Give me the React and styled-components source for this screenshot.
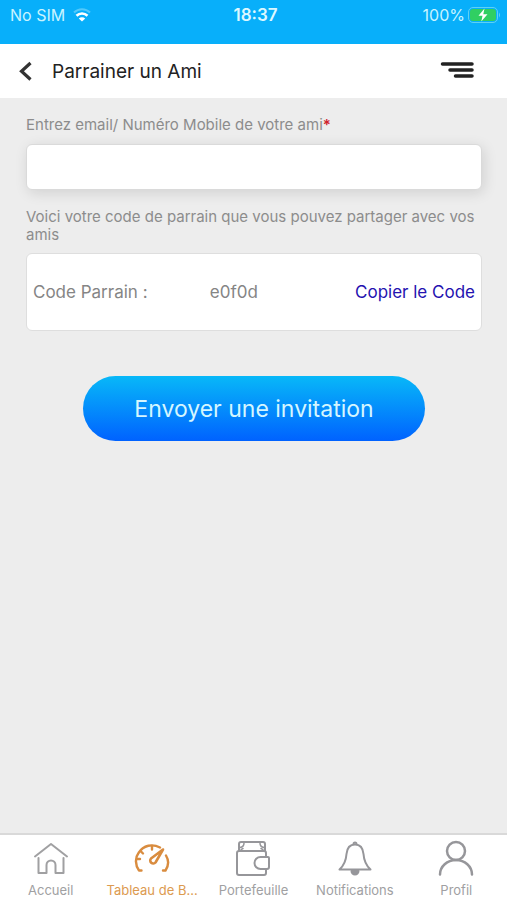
import React, { useState } from "react";
import styled, { createGlobalStyle } from "styled-components";

const GlobalStyle = createGlobalStyle`
  * {
    box-sizing: border-box;
  }

  body {
    margin: 0;
    background: #ededed;
    font-family: Inter, "Liberation Sans", sans-serif;
  }

  button,
  input {
    font-family: inherit;
  }
`;

const Screen = styled.div`
  display: flex;
  flex-direction: column;
  min-height: 100vh;
`;

const StatusBar = styled.div`
  display: grid;
  grid-template-columns: 1fr auto 1fr;
  align-items: center;
  height: 44px;
  padding: 0 6px 14px 10px;
  background: #08affa;
  color: #c9f4ff;
  font-size: 16px;
`;

const StatusGroup = styled.div`
  display: flex;
  align-items: center;
  justify-content: ${(props) => (props.$end ? "flex-end" : "flex-start")};
  gap: ${(props) => (props.$end ? "3px" : "8px")};
`;

const Clock = styled.span`
  font-size: 17px;
  font-weight: 600;
  color: #dcf8ff;
`;

const Header = styled.header`
  display: flex;
  align-items: center;
  height: 54px;
  padding: 0 32px 0 18px;
  background: #fff;
`;

const IconButton = styled.button`
  display: flex;
  padding: 0;
  border: 0;
  background: none;
  cursor: pointer;
`;

const Title = styled.h1`
  flex: 1;
  margin: 0 0 0 18px;
  font-size: 19px;
  font-weight: 400;
  color: #222;
`;

const Form = styled.form`
  flex: 1;
  display: flex;
  flex-direction: column;
  padding: 18px 25px 24px 26px;
`;

const Label = styled.label`
  font-size: 15px;
  line-height: 18px;
  color: #8c8c8c;
`;

const Required = styled.span`
  font-weight: 600;
  color: #d0202c;
`;

const TextInput = styled.input`
  height: 46px;
  margin: 10px 0 18px;
  padding: 0 12px;
  border: 1px solid #dadada;
  border-radius: 6px;
  background: #fff;
  box-shadow: 2px 3px 14px rgba(0, 0, 0, 0.12);
  font-size: 17px;
  color: #444;
  outline: none;
`;

const Hint = styled.p`
  margin: 0 0 9px;
  font-size: 15px;
  line-height: 18px;
  color: #8c8c8c;
`;

const CodeBox = styled.div`
  display: grid;
  grid-template-columns: 40% 1fr auto;
  align-items: center;
  height: 78px;
  padding: 0 6px;
  border: 1px solid #dedede;
  border-radius: 6px;
  background: #fff;
  font-size: 17px;
  color: #858585;
`;

const CopyButton = styled.button`
  padding: 0;
  border: 0;
  background: none;
  font-size: 17px;
  color: #2412b0;
  cursor: pointer;
`;

const SubmitButton = styled.button`
  align-self: center;
  width: 75%;
  height: 65px;
  margin-top: 45px;
  border: 0;
  border-radius: 33px;
  background: linear-gradient(#08b8f8, #0062ff);
  font-size: 23px;
  color: #d4f6ff;
  cursor: pointer;
`;

const TabBar = styled.nav`
  display: grid;
  grid-template-columns: repeat(5, 1fr);
  height: 67px;
  border-top: 2px solid #d9d9d9;
  background: #fff;
`;

const Tab = styled.a`
  display: flex;
  flex-direction: column;
  align-items: center;
  gap: 5px;
  min-width: 0;
  padding-top: 5px;
  font-size: 13px;
  line-height: 18px;
  white-space: nowrap;
  text-decoration: none;
  color: ${(props) => (props.$active ? "#dc9a50" : "#a0a0a2")};
`;

const TabIcon = ({ children, color = "#96969a" }) => (
  <svg
    width="36"
    height="36"
    viewBox="0 0 36 36"
    fill="none"
    stroke={color}
    strokeWidth="2"
    strokeLinecap="round"
    strokeLinejoin="round"
    aria-hidden="true"
  >
    {children}
  </svg>
);

const HomeIcon = () => (
  <TabIcon color="#a0a0a2">
    <path d="M2 16.500 18 4l16 12.500" />
    <path d="M5.500 18v15h8v-8a4.500 4.500 0 0 1 9 0v8h8V18" />
  </TabIcon>
);

const GaugeIcon = () => (
  <TabIcon color="#d98c3f">
    <path
      d="M7.500 30.500H5C1 25 1 17.500 4.500 13 9.500 5 18.500 3.500 26 7.500M32 15.500c3 5 2.500 10.500-.5 15H29"
      strokeWidth="2.400"
    />
    <path d="M18 6v3.500M7 11.500l2 2M3 19h3" strokeWidth="2.400" />
    <path d="M29 9.500 17 18.500a3 3 0 1 0 4.500 4Z" strokeWidth="2.600" />
  </TabIcon>
);

const WalletIcon = () => (
  <TabIcon>
    <path d="M4 11V4q0-2 2-2h22q2 0 2 2v7" />
    <path d="M5 7.500q4-.5 4-4.500M29 7.500q-4-.5-4-4.500M5.500 11q.5-2 2.500-2.500M28.500 11q-.5-2-2.500-2.500" strokeWidth="1.500" />
    <path d="M31 17v-4q0-2-2-2H4q-2 0-2 2v20q0 2 2 2h25q2 0 2-2v-4" />
    <path d="M33 17h-7.500a6 6 0 0 0 0 12H32q2 0 2-2V18q0-1-1-1Z" />
  </TabIcon>
);

const BellIcon = () => (
  <TabIcon>
    <path d="M18 4.500c-5.500 0-8 4-8.500 9.500-.5 7-2 11-7 15.500h31c-5-4.500-6.500-8.500-7-15.500-.5-5.500-3-9.500-8.500-9.500Z" />
    <path d="M16.500 4a1.500 1.500 0 0 1 3 0" />
    <path d="M14.500 31a3.500 3.500 0 0 0 7 0Z" fill="#96969a" />
  </TabIcon>
);

const ProfileIcon = () => (
  <TabIcon>
    <circle cx="18" cy="11" r="9" strokeWidth="2.500" />
    <path d="M2 34.500a16 14.500 0 0 1 32 0" strokeWidth="2.500" />
  </TabIcon>
);

const tabs = [
  { key: "home", label: "Accueil", icon: HomeIcon },
  { key: "dashboard", label: "Tableau de B...", icon: GaugeIcon, active: true },
  { key: "wallet", label: "Portefeuille", icon: WalletIcon },
  { key: "notifications", label: "Notifications", icon: BellIcon },
  { key: "profile", label: "Profil", icon: ProfileIcon },
];

const App = () => {
  const [contact, setContact] = useState("");
  const code = "e0f0d";

  const handleCopy = () => {
    if (navigator.clipboard) {
      navigator.clipboard.writeText(code);
    }
  };

  return (
    <Screen>
      <GlobalStyle />
      <StatusBar>
        <StatusGroup>
          <span>No SIM</span>
          <svg width="18" height="14" viewBox="0 0 18 14" fill="none" aria-hidden="true">
            <path d="M1 4.500a11.500 11.500 0 0 1 16 0" stroke="#52c9fb" strokeWidth="2" />
            <path d="M3.500 7.700a8 8 0 0 1 11 0" stroke="#fff" strokeWidth="2.600" />
            <path d="M9 13.500 5.800 10.500a4.500 4.500 0 0 1 6.400 0Z" fill="#fff" />
          </svg>
        </StatusGroup>
        <Clock>18:37</Clock>
        <StatusGroup $end>
          <span>100%</span>
          <svg width="33" height="16" viewBox="0 0 33 16" aria-hidden="true">
            <rect x="0.500" y="0.500" width="29" height="15" rx="4.500" fill="none" stroke="#5fd0f5" />
            <rect x="2" y="2" width="26" height="12" rx="3" fill="#30cf62" />
            <path d="M31 5.500q2 2.500 0 5Z" fill="#5fd0f5" />
            <path d="M16.500 1.500 10.500 8.800h4L13.300 14.500 19.500 7.200h-4.200Z" fill="#fff" />
          </svg>
        </StatusGroup>
      </StatusBar>

      <Header>
        <IconButton type="button" aria-label="Retour">
          <svg width="16" height="20" viewBox="0 0 16 20" fill="none" aria-hidden="true">
            <path d="M12.500 2 3.500 10.200l9 8.300" stroke="#333" strokeWidth="3.200" />
          </svg>
        </IconButton>
        <Title>Parrainer un Ami</Title>
        <IconButton type="button" aria-label="Menu">
          <svg width="35" height="20" viewBox="0 0 35 20" aria-hidden="true">
            <path
              d="M2.500 3H32M10 9h22M15.500 15H32"
              stroke="#222"
              strokeWidth="3.500"
              strokeLinecap="round"
            />
          </svg>
        </IconButton>
      </Header>

      <Form onSubmit={(e) => e.preventDefault()}>
        <Label htmlFor="contact">
          Entrez email/ Numéro Mobile de votre ami<Required>*</Required>
        </Label>
        <TextInput
          id="contact"
          type="text"
          value={contact}
          onChange={(e) => setContact(e.target.value)}
        />
        <Hint>Voici votre code de parrain que vous pouvez partager avec vos amis</Hint>
        <CodeBox>
          <span>Code Parrain :</span>
          <span>{code}</span>
          <CopyButton type="button" onClick={handleCopy}>
            Copier le Code
          </CopyButton>
        </CodeBox>
        <SubmitButton type="submit">Envoyer une invitation</SubmitButton>
      </Form>

      <TabBar>
        {tabs.map(({ key, label, icon: Icon, active }) => (
          <Tab
            key={key}
            href={`#${key}`}
            $active={active}
            aria-current={active ? "page" : undefined}
          >
            <Icon />
            <span>{label}</span>
          </Tab>
        ))}
      </TabBar>
    </Screen>
  );
};

export default App;
